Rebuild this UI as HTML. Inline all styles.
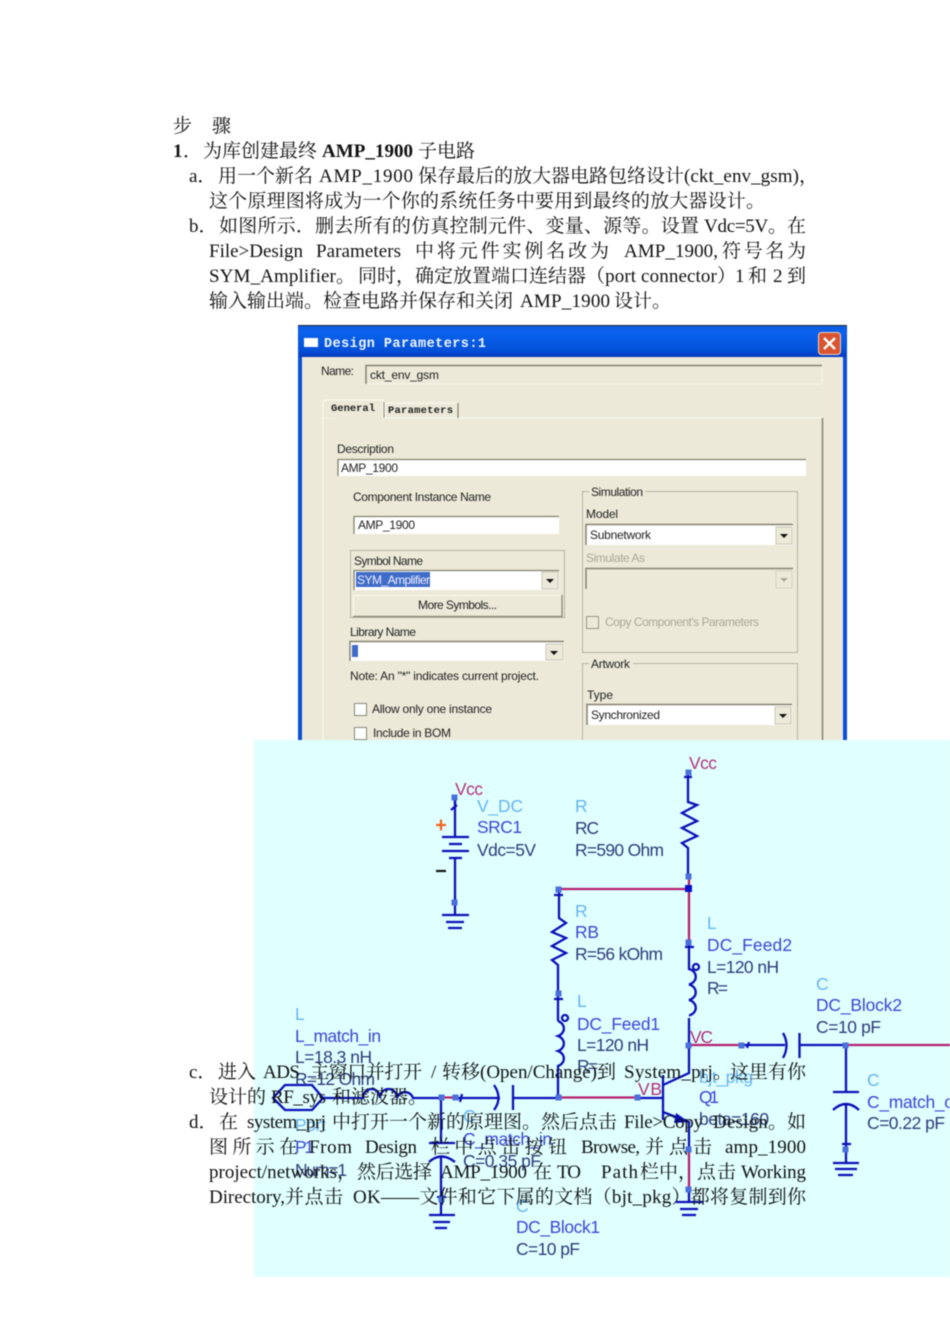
<!DOCTYPE html>
<html lang="zh-CN">
<head>
<meta charset="utf-8">
<title>步骤</title>
<style>
html,body{margin:0;padding:0;background:#fff;width:950px;height:1344px;overflow:hidden}
svg{display:block;position:absolute;left:0;top:0;filter:blur(.5px)}
.t{font-family:"Liberation Serif","Noto Serif CJK SC",serif;font-size:19px;fill:#111}
.b{font-weight:bold}
.d{font-family:"Liberation Sans",sans-serif;font-size:12px;fill:#222}
.g{fill:#aca899}
.m{font-family:"Liberation Mono",monospace;font-weight:bold;font-size:10.5px;fill:#222}
.s{font-family:"Liberation Sans",sans-serif;font-size:17.4px}
.l{fill:#68b4f0}.n{fill:#3c46d6}.p{fill:#2f3a7a}.v{fill:#b4307c}
.w{fill:none;stroke:#0a10b8;stroke-width:2.3}
.r{fill:none;stroke:#b5206f;stroke-width:2.3}
.o{fill:#4a70dc}
</style>
</head>
<body>
<svg width="950" height="1344" viewBox="0 0 950 1344" xmlns="http://www.w3.org/2000/svg">
<rect width="950" height="1344" fill="#fff"/>

<!-- dialog -->
<defs><linearGradient id="tb" x1="0" y1="0" x2="0" y2="1"><stop offset="0" stop-color="#0a5ce0"/><stop offset=".2" stop-color="#0a62ee"/><stop offset=".8" stop-color="#0350d8"/><stop offset="1" stop-color="#0238b8"/></linearGradient></defs>
<rect x="298" y="325" width="549" height="420" fill="#0a4fd8"/>
<rect x="298" y="325" width="549" height="1" fill="#223"/>
<rect x="299" y="326" width="547" height="31" fill="url(#tb)"/>
<rect x="302" y="357" width="541" height="390" fill="#ece9d8"/>
<rect x="304" y="338" width="14" height="9" fill="#fff"/>
<text x="324" y="347" textLength="162" style="font-family:'Liberation Mono',monospace;font-weight:bold;font-size:13.5px;fill:#f2f6ff">Design Parameters:1</text>
<rect x="818.500" y="332.500" width="22" height="22" rx="3" fill="#d9552f" stroke="#f3d2c4"/>
<path d="M824 338l11 11M835 338l-11 11" stroke="#fff" stroke-width="2.4"/>

<text class="d" x="321" y="375" textLength="33">Name:</text>
<rect x="366" y="365" width="456" height="19" fill="#ece9d8" stroke="#f7f6ef"/>
<path d="M366 384V365.500H822" fill="none" stroke="#85826f" stroke-width="1.500"/>
<text class="d" x="370" y="379" textLength="69">ckt_env_gsm</text>

<path d="M323 740V418H822.500V740" fill="none" stroke="#fbfaf4"/>
<path d="M822.500 418V740" stroke="#85826f" stroke-width="1.500"/>
<path d="M323 418V402l2-2h58v19" fill="#ece9d8" stroke="#fbfaf4"/>
<path d="M384 418V402" stroke="#85826f"/>
<path d="M385 418V403h72" fill="none" stroke="#fbfaf4"/><path d="M458 403V418" stroke="#85826f" stroke-width="1.200"/>
<text class="m" x="331" y="411" textLength="44">General</text>
<text class="m" x="388" y="413" textLength="65">Parameters</text>

<text class="d" x="337" y="453" textLength="57">Description</text>
<rect x="338" y="459" width="468" height="17" fill="#fff"/><path d="M338 476V459.500H806" fill="none" stroke="#85826f" stroke-width="1.300"/>
<text class="d" x="341" y="472" textLength="57">AMP_1900</text>

<text class="d" x="353" y="501" textLength="138">Component Instance Name</text>
<rect x="354" y="516" width="205" height="18" fill="#fff"/><path d="M354 534V516.500H559" fill="none" stroke="#85826f" stroke-width="1.300"/>
<text class="d" x="358" y="529" textLength="57">AMP_1900</text>

<rect x="350.500" y="550.500" width="214" height="67" fill="none" stroke="#b5b2a2"/>
<text class="d" x="354" y="565" textLength="69">Symbol Name</text>
<rect x="354" y="570" width="205" height="20" fill="#fff"/><path d="M354 590V570.500H559" fill="none" stroke="#85826f" stroke-width="1.300"/>
<rect x="356" y="572" width="74" height="15" fill="#3f6cc8"/>
<text class="d" x="357" y="584" textLength="73" style="fill:#eef">SYM_Amplifier</text>
<rect x="542" y="572" width="16" height="17" fill="#ece9d8" stroke="#c9c6b6"/><path d="M546 579h8l-4 4z" fill="#111"/>
<rect x="353.500" y="595.500" width="208" height="21" fill="#ece9d8" stroke="#fbfaf4"/><path d="M353 616.500H562V595" fill="none" stroke="#85826f" stroke-width="1.300"/>
<text class="d" x="418" y="609" textLength="79">More Symbols...</text>

<text class="d" x="350" y="636" textLength="66">Library Name</text>
<rect x="350" y="641" width="214" height="20" fill="#fff"/><path d="M350 661V641.500H564" fill="none" stroke="#85826f" stroke-width="1.500"/>
<rect x="352" y="645" width="6" height="12" fill="#3f6cc8"/>
<rect x="546" y="644" width="17" height="16" fill="#ece9d8" stroke="#c9c6b6"/><path d="M550 651h8l-4 4z" fill="#111"/>
<text class="d" x="350" y="680" textLength="189">Note: An "*" indicates current project.</text>

<rect x="354.500" y="703.500" width="12" height="12" fill="#fff" stroke="#8a8778"/>
<text class="d" x="372" y="713" textLength="120">Allow only one instance</text>
<rect x="354.500" y="727.500" width="12" height="12" fill="#fff" stroke="#8a8778"/>
<text class="d" x="373" y="737" textLength="78">Include in BOM</text>

<rect x="582.500" y="491.500" width="215" height="161" fill="none" stroke="#b5b2a2"/>
<rect x="589" y="487" width="56" height="10" fill="#ece9d8"/>
<text class="d" x="591" y="496" textLength="52">Simulation</text>
<text class="d" x="586" y="518" textLength="32">Model</text>
<rect x="586" y="524" width="207" height="21" fill="#fff"/><path d="M586 545V524.500H793" fill="none" stroke="#85826f" stroke-width="1.500"/>
<text class="d" x="590" y="539" textLength="61">Subnetwork</text>
<rect x="776" y="527" width="16" height="17" fill="#ece9d8" stroke="#c9c6b6"/><path d="M780 534h8l-4 4z" fill="#111"/>
<text class="d g" x="586" y="562" textLength="59">Simulate As</text>
<path d="M586 589V568.500H793" fill="none" stroke="#85826f" stroke-width="1.500"/>
<rect x="776" y="571" width="16" height="17" fill="#ece9d8" stroke="#d5d2c2"/><path d="M780 578h8l-4 4z" fill="#aca899"/>
<rect x="586.500" y="616.500" width="12" height="12" fill="#ece9d8" stroke="#9a9788"/>
<text class="d g" x="605" y="626" textLength="154">Copy Component's Parameters</text>

<path d="M582.500 745V663.500H797.500V745" fill="none" stroke="#b5b2a2"/>
<rect x="589" y="659" width="44" height="10" fill="#ece9d8"/>
<text class="d" x="591" y="668" textLength="39">Artwork</text>
<text class="d" x="587" y="699" textLength="26">Type</text>
<rect x="587" y="704" width="205" height="21" fill="#fff"/><path d="M587 725V704.500H792" fill="none" stroke="#85826f" stroke-width="1.500"/>
<text class="d" x="591" y="719" textLength="69">Synchronized</text>
<rect x="775" y="707" width="16" height="17" fill="#ece9d8" stroke="#c9c6b6"/><path d="M779 714h8l-4 4z" fill="#111"/>

<!-- schematic -->
<rect x="254" y="740" width="696" height="537" fill="#e0ffff"/>

<path class="r" d="M559 889H689M689 876V944M559 1097.500H637M689 1045H741M846 1045H950M689 1149V1189M441 1097.500H455"/>
<path class="w" d="M455 798V837M442 837H469M449 844H462M442 851H469M449 858H462M455 858V915M442 915H469M446 922H464M448 928H462"/>
<path class="w" d="M455 798V805M451 810l6-5"/>
<path class="w" d="M688 772V802L697 805 682 813 697 821 682 828 697 836 682 843 688 848V876M684 777H692"/>
<path class="w" d="M559 889V918L566 923 552 932 566 938 552 946 566 953 552 960 558 965V1021M554 895H563M554 999H563"/>
<path class="w" d="M558 1021a9 8 0 0 1 0 15a9 8 0 0 1 0 15a9 8 0 0 1 0 15V1098"/>
<circle class="w" cx="565" cy="1018" r="3" stroke-width="1.800"/>
<path class="w" d="M689 942V969a9 8 0 0 1 0 15.500a9 8 0 0 1 0 15.500a9 8 0 0 1 0 15.500"/>
<circle class="w" cx="696" cy="967" r="3" stroke-width="1.800"/>
<path class="w" d="M685 947H694M689 1018V1073L663 1085M663 1075V1120M637 1098H663M663 1112L689 1122V1149"/>
<path d="M676 1113l13 9-15 1z" fill="#0a10b8"/>
<path class="w" d="M689 1189V1202M676 1202H703M680 1209H698M682 1215H696"/>
<path class="w" d="M741 1045H785M749 1042l-2 6M783 1033Q790 1045 783 1058M799.500 1033V1058M800 1045H846V1092M833 1092H859M833 1110Q846 1098 859 1110M846 1105V1163M842 1144H851M833 1163H859M835 1169H857M838 1175H853"/>
<path class="w" d="M285 1085H312L323 1098 312 1110H285L273 1098Z"/>
<path class="w" d="M323 1098H363a8.500 9 0 0 1 17 0a8.500 9 0 0 1 17 0a8.500 9 0 0 1 16 0H441M455 1098H500M462 1094l-2 8M494 1085Q503 1098 494 1110M513 1085V1110M513 1098H559"/>
<path class="w" d="M441 1098V1143M429 1143H455M429 1162Q441 1151 455 1162M441 1157V1215M429 1215H455M433 1222H450M435 1228H447M437 1197H446"/>
<path d="M436 825h10M441 819.500v11" stroke="#f0651e" stroke-width="2.200"/>
<path d="M436 871h10" stroke="#111" stroke-width="2.200"/>

<g class="o">
<rect x="451.500" y="794.500" width="6" height="6"/><rect x="451.500" y="899.500" width="6" height="6"/>
<rect x="685.500" y="769.500" width="6" height="6"/><rect x="685.500" y="873.500" width="6" height="6"/>
<rect x="555.500" y="886.500" width="6" height="6"/><rect x="685.500" y="939.500" width="6" height="6"/>
<rect x="555.500" y="990.500" width="6" height="6"/><rect x="555.500" y="1094.500" width="6" height="6"/>
<rect x="634.500" y="1094.500" width="6" height="6"/><rect x="685.500" y="1042.500" width="6" height="6"/>
<rect x="738.500" y="1042.500" width="6" height="6"/><rect x="842.500" y="1042.500" width="6" height="6"/>
<rect x="842.500" y="1146.500" width="6" height="6"/><rect x="685.500" y="1146.500" width="6" height="6"/>
<rect x="685.500" y="1186.500" width="6" height="6"/><rect x="438.500" y="1094.500" width="6" height="6"/>
<rect x="452.500" y="1094.500" width="6" height="6"/><rect x="438.500" y="1196.500" width="6" height="6"/>
</g>
<rect x="685" y="885" width="7" height="7" fill="#0a10c8"/>

<g class="s">
<text class="v" x="689" y="769" textLength="28">Vcc</text>
<text class="v" x="455" y="795" textLength="28">Vcc</text>
<text class="l" x="477" y="812" textLength="46">V_DC</text>
<text class="n" x="477" y="833" textLength="45">SRC1</text>
<text class="p" x="477" y="856" textLength="59">Vdc=5V</text>
<text class="l" x="575" y="812">R</text>
<text class="p" x="575" y="834" textLength="24">RC</text>
<text class="p" x="575" y="856" textLength="89">R=590 Ohm</text>
<text class="l" x="575" y="917">R</text>
<text class="n" x="575" y="938" textLength="24">RB</text>
<text class="p" x="575" y="960" textLength="88">R=56 kOhm</text>
<text class="l" x="707" y="929">L</text>
<text class="n" x="707" y="951" textLength="85">DC_Feed2</text>
<text class="p" x="707" y="973" textLength="72">L=120 nH</text>
<text class="p" x="707" y="994" textLength="21">R=</text>
<text class="l" x="577" y="1007">L</text>
<text class="n" x="577" y="1030" textLength="83">DC_Feed1</text>
<text class="p" x="577" y="1051" textLength="72">L=120 nH</text>
<text class="p" x="577" y="1072" textLength="21">R=</text>
<text class="v" x="690" y="1043" textLength="23">VC</text>
<text class="v" x="638" y="1095" textLength="24">VB</text>
<text class="l" x="699" y="1083" textLength="54">bjt_pkg</text>
<text class="n" x="699" y="1103" textLength="20">Q1</text>
<text class="p" x="699" y="1125" textLength="70">beta=160</text>
<text class="l" x="816" y="990">C</text>
<text class="n" x="816" y="1011" textLength="86">DC_Block2</text>
<text class="p" x="816" y="1033" textLength="65">C=10 pF</text>
<text class="l" x="867" y="1086">C</text>
<text class="n" x="867" y="1108" textLength="101">C_match_out</text>
<text class="p" x="867" y="1129" textLength="78">C=0.22 pF</text>
<text class="l" x="295" y="1020">L</text>
<text class="n" x="295" y="1042" textLength="86">L_match_in</text>
<text class="p" x="295" y="1063" textLength="77">L=18.3 nH</text>
<text class="p" x="295" y="1085" textLength="80">R=12 Ohm</text>
<text class="l" x="295" y="1131" textLength="31">Port</text>
<text class="n" x="295" y="1153" textLength="19">P1</text>
<text class="p" x="295" y="1176" textLength="52">Num=1</text>
<text class="l" x="463" y="1122">C</text>
<text class="n" x="463" y="1145" textLength="89">C_match_in</text>
<text class="p" x="463" y="1167" textLength="78">C=0.35 pF</text>
<text class="l" x="516" y="1212">C</text>
<text class="n" x="516" y="1233" textLength="84">DC_Block1</text>
<text class="p" x="516" y="1255" textLength="64">C=10 pF</text>
</g>

<!-- document text -->
<g class="t">
<text x="173" y="132">步</text><text x="212" y="132">骤</text>

<text class="b" x="173" y="157">1</text><text x="183" y="157">．</text>
<text x="203" y="157" textLength="114">为库创建最终</text>
<text class="b" x="322" y="157" textLength="91">AMP_1900</text>
<text x="418" y="157" textLength="57">子电路</text>

<text x="189" y="182">a．</text>
<text x="218" y="182" textLength="95">用一个新名</text>
<text x="319" y="182" textLength="94">AMP_1900</text>
<text x="418" y="182" textLength="266">保存最后的放大器电路包络设计</text>
<text x="684" y="182" textLength="134">(ckt_env_gsm)，</text>

<text x="209" y="207" textLength="556">这个原理图将成为一个你的系统任务中要用到最终的放大器设计。</text>

<text x="189" y="232">b．</text>
<text x="219" y="232" textLength="480">如图所示．删去所有的仿真控制元件、变量、源等。设置</text>
<text x="704" y="232" textLength="83">Vdc=5V。</text>
<text x="787" y="232">在</text>

<text x="209" y="257" textLength="94">File&gt;Design</text>
<text x="316" y="257" textLength="85">Parameters</text>
<text x="415" y="257" textLength="194">中将元件实例名改为</text>
<text x="624" y="257" textLength="94">AMP_1900,</text>
<text x="722" y="257" textLength="84">符号名为</text>

<text x="209" y="282" textLength="146">SYM_Amplifier。</text>
<text x="358" y="282" textLength="228">同时，确定放置端口连结器</text>
<text x="586" y="282" textLength="150">（port connector）</text>
<text x="735" y="282">1</text><text x="748" y="282">和</text>
<text x="773" y="282">2</text><text x="787" y="282">到</text>

<text x="209" y="307" textLength="304">输入输出端。检查电路并保存和关闭</text>
<text x="520" y="307" textLength="90">AMP_1900</text>
<text x="614" y="307" textLength="57">设计。</text>

<text x="189" y="1078">c．</text>
<text x="218" y="1078" textLength="38">进入</text>
<text x="263" y="1078" textLength="37">ADS</text>
<text x="310" y="1078" textLength="112">主窗口并打开</text>
<text x="431" y="1078">/</text>
<text x="442" y="1078" textLength="174">转移(Open/Change)到</text>
<text x="624" y="1078" textLength="108">System_prj。</text>
<text x="730" y="1078" textLength="76">这里有你</text>

<text x="209" y="1103" textLength="57">设计的</text>
<text x="271" y="1103" textLength="55">RF_sys</text>
<text x="332" y="1103" textLength="95">和滤波器。</text>

<text x="189" y="1128">d．</text>
<text x="219" y="1128">在</text>
<text x="247" y="1128" textLength="79">system_prj</text>
<text x="332" y="1128" textLength="285">中打开一个新的原理图。然后点击</text>
<text x="624" y="1128" textLength="79">File&gt;Copy</text>
<text x="713" y="1128" textLength="74">Design。</text>
<text x="787" y="1128">如</text>

<text x="209" y="1153" textLength="89">图所示在</text>
<text x="309" y="1153" textLength="43">From</text>
<text x="365" y="1153" textLength="52">Design</text>
<text x="431" y="1153" textLength="136">栏中点击按钮</text>
<text x="581" y="1153" textLength="59">Browse,</text>
<text x="645" y="1153" textLength="67">并点击</text>
<text x="725" y="1153" textLength="81">amp_1900</text>

<text x="209" y="1178" textLength="147">project/networks，</text>
<text x="357" y="1178" textLength="75">然后选择</text>
<text x="440" y="1178" textLength="87">AMP_1900</text>
<text x="533" y="1178">在</text>
<text x="557" y="1178" textLength="24">TO</text>
<text x="601" y="1178" textLength="37">Path</text>
<text x="640" y="1178" textLength="57">栏中，</text>
<text x="697" y="1178" textLength="39">点击</text>
<text x="741" y="1178" textLength="65">Working</text>

<text x="209" y="1203" textLength="76">Directory,</text>
<text x="285" y="1203" textLength="58">并点击</text>
<text x="353" y="1203" textLength="453">OK——文件和它下属的文档（bjt_pkg）都将复制到你</text>
</g>
</svg>
</body>
</html>
